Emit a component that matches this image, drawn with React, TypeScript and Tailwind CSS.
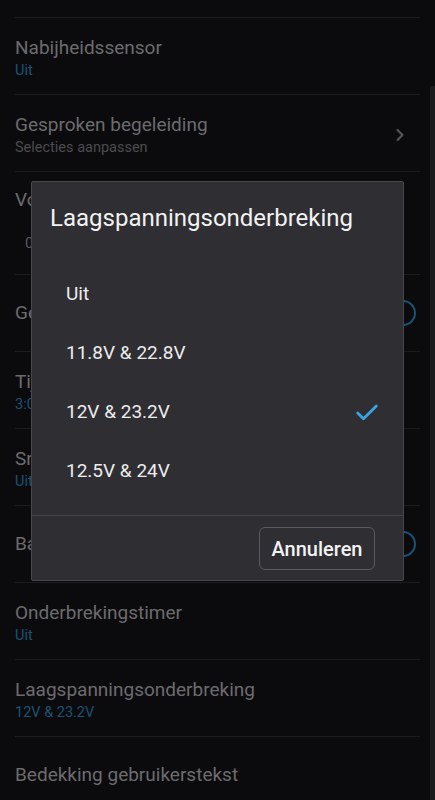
import { Check, ChevronRight } from "lucide-react"

type Row = {
  title: string
  sub?: string
  kind?: "chevron" | "toggle" | "slider"
  muted?: boolean
}

const rows: Row[] = [
  { title: "Nabijheidssensor", sub: "Uit" },
  { title: "Gesproken begeleiding", sub: "Selecties aanpassen", kind: "chevron", muted: true },
  { title: "Volume gesproken begeleiding", kind: "slider" },
  { title: "Geluid bij verbinden", kind: "toggle" },
  { title: "Tijdslimiet", sub: "3:00 min" },
  { title: "Snelheidslimiet", sub: "Uit" },
  { title: "Batterijbesparing", kind: "toggle" },
  { title: "Onderbrekingstimer", sub: "Uit" },
  { title: "Laagspanningsonderbreking", sub: "12V & 23.2V" },
  { title: "Bedekking gebruikerstekst" },
]

const options = ["Uit", "11.8V & 22.8V", "12V & 23.2V", "12.5V & 24V"]
const selected = 2

export default function App() {
  return (
    <div
      className="relative w-[435px] h-[800px] overflow-hidden bg-[#0b0b0d]"
      style={{ fontFamily: "Roboto, 'Noto Sans', sans-serif" }}
    >
      {/* scrollbar */}
      <div className="absolute right-0 top-[86px] w-[5px] h-[714px] bg-[#1b1b1e]" />

      <div className="h-[18px] mx-[15px] border-b border-[#1c1c1f]" />
      {rows.map((r) => (
        <ListRow key={r.title} row={r} />
      ))}

      {/* dialog */}
      <div className="absolute left-[31px] top-[181px] w-[373px] h-[400px] bg-[#2f2e33] border border-[#47464b] rounded-[2px] flex flex-col">
        <div className="pl-[18px] pt-[19px] h-[83px] text-[24px] leading-[34px] text-[#f2f2f2]">
          Laagspanningsonderbreking
        </div>
        <div className="flex flex-col">
          {options.map((o, i) => (
            <div key={o} className="h-[59px] flex items-center pl-[34px] pr-[22px] justify-between">
              <span className="text-[19px] text-[#ececec]">{o}</span>
              {i === selected && <Check className="w-[28px] h-[28px] text-[#3aa3e3]" strokeWidth={2.4} />}
            </div>
          ))}
        </div>
        <div className="mt-[14px] border-t border-[#444348]" />
        <div className="flex justify-end pr-[28px] pt-[11px]">
          <button className="h-[43px] w-[116px] rounded-[6px] border border-[#5a595e] text-[20px] font-medium text-[#f2f2f2]">
            Annuleren
          </button>
        </div>
      </div>
    </div>
  )
}

function ListRow({ row }: { row: Row }) {
  const h = row.kind === "slider" ? "h-[103px]" : "h-[77px]"
  return (
    <div className={`${h} mx-[15px] border-b border-[#1c1c1f] flex items-center relative`}>
      {row.kind === "slider" ? (
        <div className="flex flex-col self-start pt-[15px]">
          <span className="text-[19px] leading-[26px] text-[#6b6b6e]">{row.title}</span>
          <span className="pl-[10px] pt-[20px] text-[15px] leading-[20px] text-[#5a5a5d]">0</span>
        </div>
      ) : (
        <div className={`flex-1 flex flex-col ${row.sub ? "pt-[3px]" : ""}`}>
          <span className="text-[19px] leading-[26px] text-[#6b6b6e]">{row.title}</span>
          {row.sub && (
            <span className={`text-[14.5px] leading-[20px] ${row.muted ? "text-[#4c4c4f]" : "text-[#1b5276]"}`}>
              {row.sub}
            </span>
          )}
        </div>
      )}
      {row.kind === "chevron" && <ChevronRight className="w-[20px] h-[20px] text-[#56565a] mr-[10px] mt-[4px]" strokeWidth={2.5} />}
      {row.kind === "toggle" && (
        <div className="w-[26px] h-[26px] rounded-full border-[2.5px] border-[#1b5276] mr-[4px]" />
      )}
    </div>
  )
}
